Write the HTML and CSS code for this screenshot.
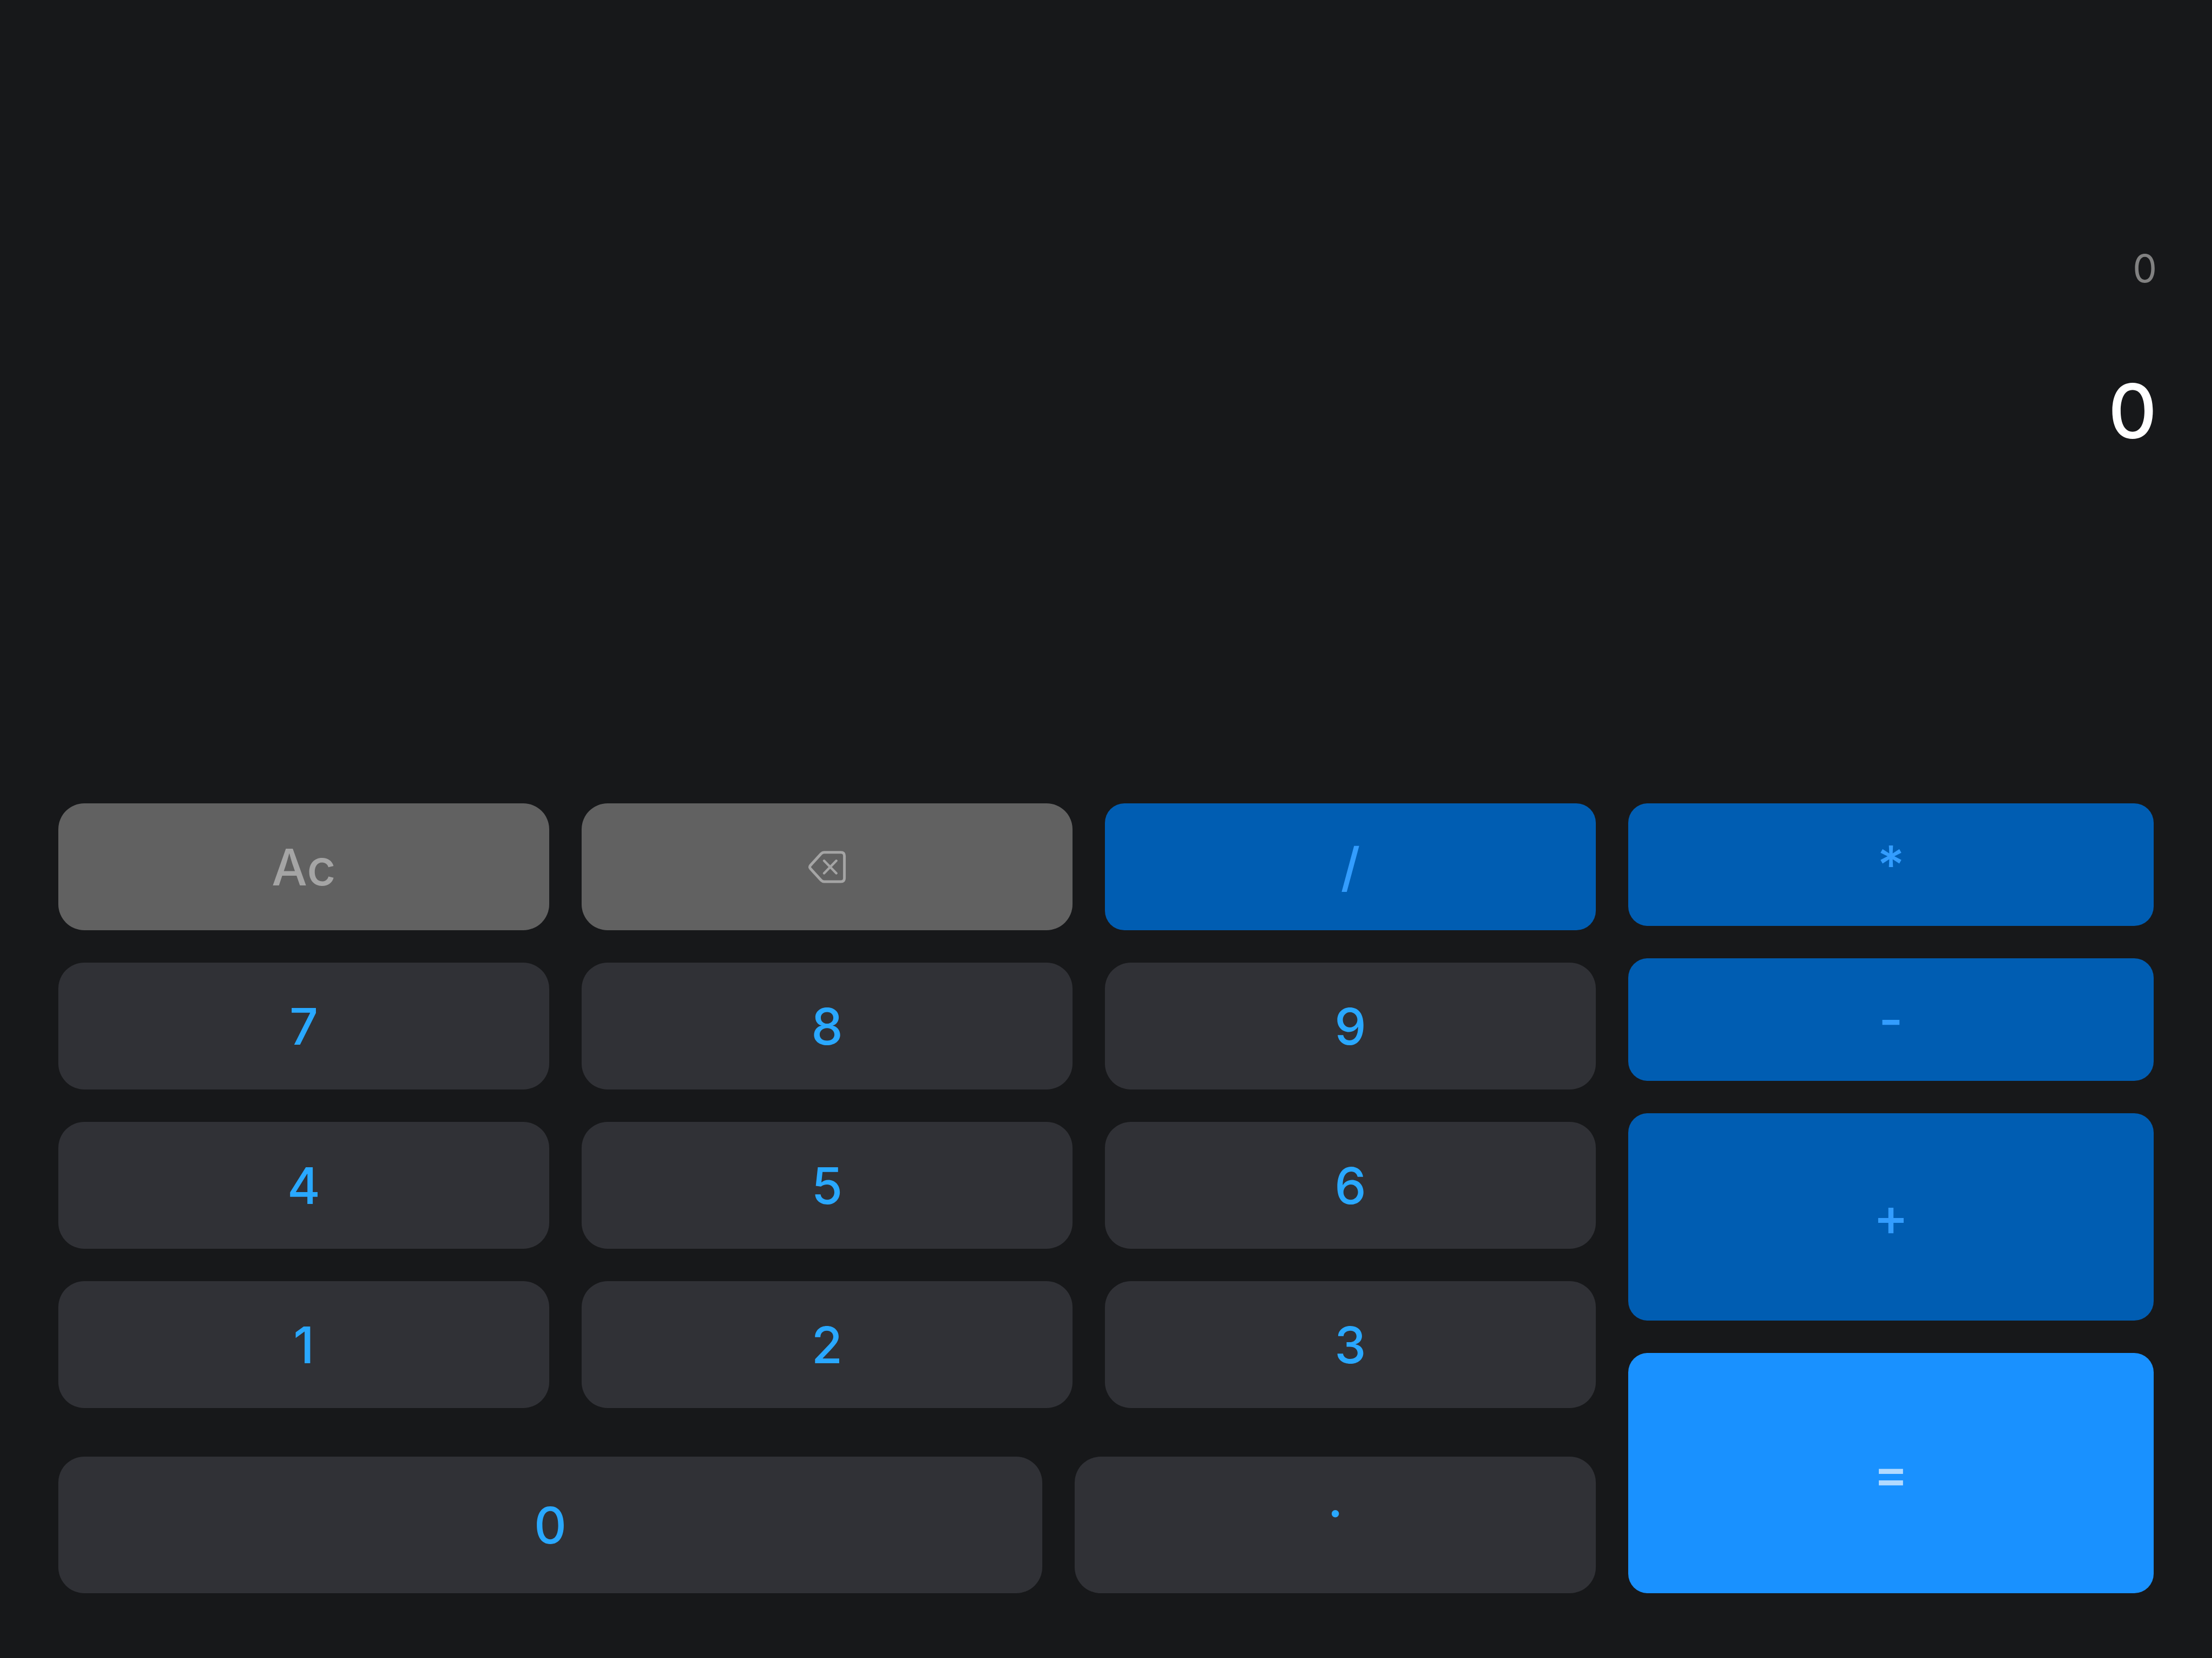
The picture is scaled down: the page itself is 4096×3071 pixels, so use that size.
FILE: index.html
```html
<!DOCTYPE html>
<html lang="en">
<head>
  <meta charset="utf-8">
  <meta name="viewport" content="width=device-width, initial-scale=1">
  <title>Calculator</title>
  <link rel="stylesheet" href="styles.css">
</head>
<body>
  <main class="calculator">
    <section class="display" aria-label="Display">
      <output class="expression">0</output>
      <output class="result">0</output>
    </section>
    <section class="keypad" aria-label="Keypad">
      <div class="main-keys">
        <div class="key-grid">
          <button class="key key-utility" type="button">Ac</button>
          <button class="key key-utility" type="button" aria-label="Delete">
            <svg class="key-icon" viewBox="0 0 71 62" fill="none" stroke="currentColor" stroke-linecap="round" stroke-linejoin="round" aria-hidden="true">
              <path stroke-width="5" d="M30 3.700H61Q67.600 3.700 67.600 10.300V51.400Q67.600 58 61 58H30Q27 58 24.500 55.500L4.800 34Q2 30.900 4.800 27.800L24.500 6.200Q27 3.700 30 3.700Z"/>
              <path stroke-width="4.500" d="M30 19.300L52.600 42.500M52.600 19.300L30 42.500"/>
            </svg>
          </button>
          <button class="key key-operator" type="button">/</button>
          <button class="key" type="button">7</button>
          <button class="key" type="button">8</button>
          <button class="key" type="button">9</button>
          <button class="key" type="button">4</button>
          <button class="key" type="button">5</button>
          <button class="key" type="button">6</button>
          <button class="key" type="button">1</button>
          <button class="key" type="button">2</button>
          <button class="key" type="button">3</button>
        </div>
        <div class="bottom-keys">
          <button class="key" type="button">0</button>
          <button class="key key-point" type="button">·</button>
        </div>
      </div>
      <div class="operator-keys">
        <button class="key key-operator" type="button">*</button>
        <button class="key key-operator" type="button">-</button>
        <button class="key key-operator" type="button">+</button>
        <button class="key key-operator key-equals" type="button">=</button>
      </div>
    </section>
  </main>
</body>
</html>
```

FILE: styles.css
```css
* {
  box-sizing: border-box;
}

body {
  margin: 0;
  background: #17181a;
  font-family: Inter, "Liberation Sans", sans-serif;
}

.calculator {
  display: flex;
  flex-direction: column;
  min-height: 100vh;
}

.display {
  display: flex;
  flex: 1;
  flex-direction: column;
  align-items: flex-end;
  justify-content: center;
  gap: 132px;
  padding: 0 102px 194px;
}

.expression {
  color: #818181;
  font-size: 71px;
  line-height: 96px;
}

.result {
  color: #fff;
  font-size: 140px;
  font-weight: 500;
  line-height: 168px;
}

.keypad {
  display: grid;
  grid-template-columns: 2847fr 973fr;
  gap: 60px;
  padding: 0 108px 120px;
}

.main-keys {
  display: flex;
  flex-direction: column;
  gap: 90px;
}

.key-grid {
  display: grid;
  grid-template-columns: repeat(3, 1fr);
  grid-auto-rows: 235px;
  gap: 60px;
}

.bottom-keys {
  display: grid;
  grid-template-columns: 1822fr 965fr;
  grid-auto-rows: 253px;
  gap: 60px;
}

.operator-keys {
  display: grid;
  grid-template-rows: 227fr 227fr 384fr 445fr;
  gap: 60px;
}

.key {
  display: flex;
  align-items: center;
  justify-content: center;
  padding: 0;
  border: 0;
  border-radius: 48px;
  background: #303136;
  color: #29a8ff;
  font-family: inherit;
  font-size: 93px;
  font-weight: 500;
  line-height: 112px;
  cursor: pointer;
}

.key-utility {
  background: #616161;
  color: #a5a5a5;
}

.key-operator {
  border-radius: 36px;
  background: #005db2;
  color: #339dff;
  font-size: 98px;
}

.key-equals {
  background: #1991ff;
  color: #b2daff;
}

.key-point {
  padding-bottom: 46px;
}

.key-icon {
  width: 71px;
  height: 62px;
}
```
